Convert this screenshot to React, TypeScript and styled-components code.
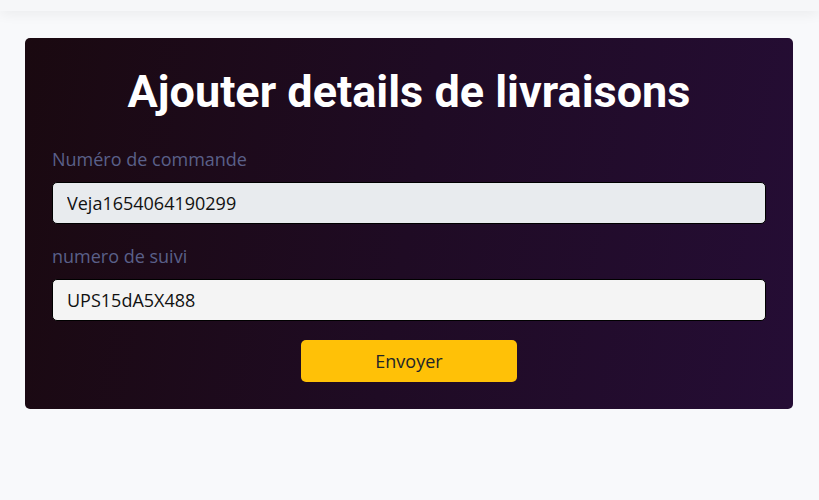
import { createGlobalStyle } from "styled-components";
import styled from "styled-components";

const GlobalStyle = createGlobalStyle`
    html, body {
        margin: 0;
        padding: 0;
        background: #f8f9fb;
        font-family: "Open Sans", "Noto Sans", sans-serif;
    }
    * { box-sizing: border-box; }
`

const TopBar = styled.header`
    height: 11px;
    background: #f6f7f9;
    box-shadow: 0 2px 14px rgba(0,0,0,.07);
`

const Page = styled.main`
    padding: 27px 26px 0 25px;
`

const Card = styled.form`
    border-radius: 5px;
    background: linear-gradient(100deg, #1a0910 0%, #1f0b24 50%, #250d35 100%);
    padding: 26px 27px 27px 27px;
    display: flex;
    flex-direction: column;
`

const Title = styled.h1`
    margin: 0 0 28px;
    text-align: center;
    color: #fff;
    font-family: Roboto, "Liberation Sans", sans-serif;
    font-weight: 700;
    font-size: 45px;
    line-height: 56px;
`

const Field = styled.div`
    display: flex;
    flex-direction: column;
    margin-bottom: 19px;
    & + & {
        margin-top: 2px;
    }
`

const Label = styled.label`
    color: #5a6089;
    font-size: 18px;
    line-height: 22px;
    margin-bottom: 12px;
`

const Input = styled.input<{ $tone: string }>`
    height: 42px;
    border: 1px solid #000;
    border-radius: 5px;
    background: ${p => p.$tone};
    padding: 0 14px;
    font-family: "Open Sans", sans-serif;
    font-size: 18px;
    color: #111;
    outline: none;
`

const Submit = styled.button`
    align-self: center;
    width: 216px;
    height: 42px;
    border: none;
    border-radius: 5px;
    background: #ffc107;
    color: #212529;
    font-family: "Open Sans", sans-serif;
    font-size: 18px;
`

export default function App() {
    return (
        <>
            <GlobalStyle />
            <TopBar />
            <Page>
                <Card onSubmit={e => e.preventDefault()}>
                    <Title>Ajouter details de livraisons</Title>
                    <Field>
                        <Label>Numéro de commande</Label>
                        <Input $tone="#e8ebee" defaultValue="Veja1654064190299" />
                    </Field>
                    <Field>
                        <Label>numero de suivi</Label>
                        <Input $tone="#f4f4f4" defaultValue="UPS15dA5X488" />
                    </Field>
                    <Submit type="submit">Envoyer</Submit>
                </Card>
            </Page>
        </>
    )
}
